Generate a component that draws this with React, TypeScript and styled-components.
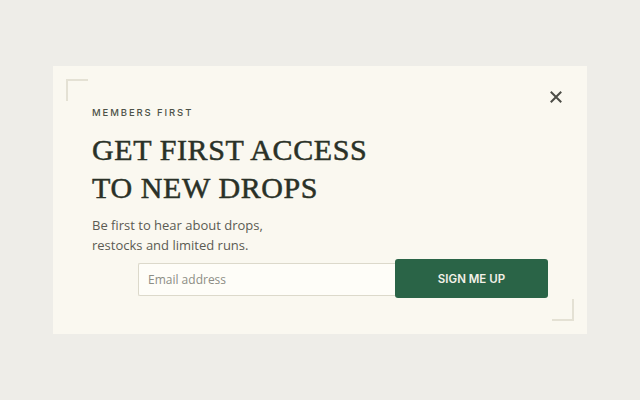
import React from "react";
import styled, { createGlobalStyle } from "styled-components";

const Global = createGlobalStyle`
  html, body { margin: 0; padding: 0; background: #eeede8; }
  body { width: 640px; height: 400px; overflow: hidden; }
`;

const Page = styled.div`
  width: 640px;
  height: 400px;
  display: flex;
  align-items: center;
  justify-content: center;
`;

const Card = styled.div`
  position: relative;
  box-sizing: border-box;
  width: 534px;
  height: 268px;
  background: #faf8f0;
  padding: 41px 39px 0 39px;
  display: flex;
  flex-direction: column;
`;

const Corner = styled.span<{ $pos: "tl" | "br" }>`
  position: absolute;
  width: 20px;
  height: 20px;
  border-color: #e4e1d4;
  border-style: solid;
  border-width: 0;
  ${(p) =>
    p.$pos === "tl"
      ? "top: 13px; left: 13px; border-top-width: 2px; border-left-width: 2px;"
      : "bottom: 13px; right: 13px; border-bottom-width: 2px; border-right-width: 2px;"}
`;

const Close = styled.button`
  position: absolute;
  top: 21px;
  right: 21px;
  width: 20px;
  height: 20px;
  padding: 0;
  border: 0;
  background: transparent;
  display: flex;
  align-items: center;
  justify-content: center;
  cursor: pointer;
`;

const Eyebrow = styled.div`
  font-family: "Inter", "Liberation Sans", sans-serif;
  font-size: 9.5px;
  font-weight: 500;
  letter-spacing: 1.9px;
  color: #4d5248;
  line-height: 12px;
`;

const Title = styled.h1`
  margin: 12px 0 0 0;
  font-family: "Liberation Serif", "DejaVu Serif", serif;
  font-weight: 400;
  font-size: 30px;
  line-height: 38px;
  color: #2a3127;
  letter-spacing: 0.6px;
  -webkit-text-stroke: 0.5px #2a3127;
`;

const Body = styled.p`
  margin: 9px 0 0 0;
  font-family: "Open Sans", "Liberation Sans", sans-serif;
  font-size: 13px;
  line-height: 19.5px;
  color: #5b5b53;
  letter-spacing: 0;
`;

const Form = styled.form`
  margin: 4px 0 0 46px;
  display: flex;
  align-items: center;
  width: 410px;
`;

const Input = styled.input`
  box-sizing: border-box;
  width: 257px;
  height: 33px;
  margin-top: 1px;
  border: 1px solid #dcd9cb;
  border-right: 0;
  border-radius: 2px 0 0 2px;
  background: #fefdf8;
  padding: 0 9px;
  font-family: "Open Sans", "Liberation Sans", sans-serif;
  font-size: 12px;
  color: #333;
  outline: none;
  &::placeholder { color: #8d8d85; }
`;

const Button = styled.button`
  box-sizing: border-box;
  width: 153px;
  height: 39px;
  border: 0;
  border-radius: 3px;
  background: #2a6447;
  color: #f3f1e8;
  font-family: "Inter", "Liberation Sans", sans-serif;
  font-size: 11.5px;
  font-weight: 600;
  letter-spacing: 0;
  cursor: pointer;
`;

export default function App() {
  return (
    <>
      <Global />
      <Page>
        <Card>
          <Corner $pos="tl" />
          <Corner $pos="br" />
          <Close aria-label="Close">
            <svg width="12" height="12" viewBox="0 0 12 12">
              <path d="M1.5 1.5 L10.5 10.5 M10.5 1.5 L1.5 10.5" stroke="#4b4c46" strokeWidth="2" strokeLinecap="square" />
            </svg>
          </Close>
          <Eyebrow>MEMBERS FIRST</Eyebrow>
          <Title>
            GET FIRST ACCESS
            <br />
            TO NEW DROPS
          </Title>
          <Body>
            Be first to hear about drops,
            <br />
            restocks and limited runs.
          </Body>
          <Form onSubmit={(e) => e.preventDefault()}>
            <Input placeholder="Email address" />
            <Button type="submit">SIGN ME UP</Button>
          </Form>
        </Card>
      </Page>
    </>
  );
}
